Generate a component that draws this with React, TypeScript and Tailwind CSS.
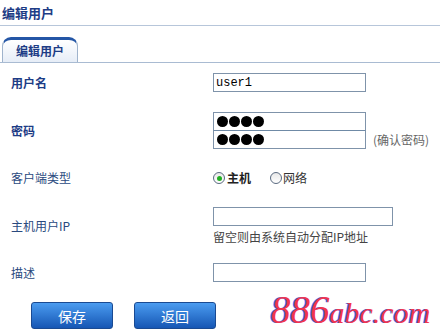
import React from "react";

const cjk = { fontFamily: '"Noto Sans CJK SC", "Noto Sans", sans-serif' };

function Label({ children, bold }: { children: React.ReactNode; bold?: boolean }) {
  return (
    <div
      className={`w-[202px] shrink-0 text-[12px] leading-[16px] ${bold ? "font-bold text-[#1d3c86]" : "text-[#2a4a7e]"}`}
    >
      {children}
    </div>
  );
}

function Radio({ checked }: { checked?: boolean }) {
  return (
    <span className="w-[12px] h-[12px] rounded-full border border-[#5a6a80] bg-gradient-to-b from-[#e8e8e8] to-white flex items-center justify-center shrink-0">
      {checked && <span className="w-[5px] h-[5px] rounded-full bg-[#22b022]" />}
    </span>
  );
}

function Dots() {
  return (
    <div className="flex items-center gap-[1px] pl-[3px] h-full">
      {[0, 1, 2, 3].map((i) => (
        <span key={i} className="w-[11px] h-[11px] rounded-full bg-black" />
      ))}
    </div>
  );
}

export default function App() {
  return (
    <div className="relative w-[440px] h-[334px] bg-white overflow-hidden" style={cjk}>
      <div className="h-[26px] border-b border-[#b7c6da] flex items-center pl-[2px]">
        <span className="text-[13px] font-bold text-[#1d3c86] leading-none">编辑用户</span>
      </div>
      <div className="mt-[11px] h-[26px] border-b border-[#a9bbd2] flex items-end pl-[2px]">
        <div className="w-[76px] h-[25px] rounded-t-[9px] border border-b-0 border-[#9fb3cc] border-t-[3px] border-t-[#2456a6] bg-gradient-to-b from-white to-[#e6edf7] flex items-center justify-center">
          <span className="text-[12px] font-bold text-[#1d3c86] leading-none">编辑用户</span>
        </div>
      </div>

      <div className="pl-[11px]">
        <div className="mt-[10px] flex items-center h-[19px]">
          <Label bold>用户名</Label>
          <div className="w-[153px] h-[19px] border border-[#7f93aa] flex items-center pl-[2px] text-[12px] text-black" style={{ fontFamily: '"Liberation Mono", monospace' }}>
            user1
          </div>
        </div>

        <div className="mt-[20px] flex items-center">
          <Label bold>密码</Label>
          <div className="flex flex-col">
            <div className="w-[153px] h-[19px] border border-[#7f93aa]">
              <Dots />
            </div>
            <div className="flex items-center -mt-[1px]">
              <div className="w-[153px] h-[19px] border border-[#7f93aa] border-t-[#6f8aa6]">
                <Dots />
              </div>
              <span className="ml-[7px] text-[12px] text-[#666]">(确认密码)</span>
            </div>
          </div>
        </div>

        <div className="mt-[20px] flex items-center h-[18px]">
          <Label>客户端类型</Label>
          <div className="flex items-center text-[12px] font-bold text-[#222]">
            <Radio checked />
            <span className="ml-[2px]">主机</span>
            <span className="w-[19px]" />
            <Radio />
            <span className="ml-[1px] font-normal text-[#333]">网络</span>
          </div>
        </div>

        <div className="mt-[20px] flex items-center">
          <Label>主机用户IP</Label>
          <div className="flex flex-col">
            <div className="w-[180px] h-[19px] border border-[#7f93aa]" />
            <span className="mt-[3px] text-[12px] leading-[16px] text-[#444]">留空则由系统自动分配IP地址</span>
          </div>
        </div>

        <div className="mt-[18px] flex items-center h-[19px]">
          <Label>描述</Label>
          <div className="w-[153px] h-[19px] border border-[#7f93aa]" />
        </div>

        <div className="mt-[20px] flex gap-[21px] pl-[20px]">
          <button className="w-[82px] h-[27px] rounded-[3px] border border-[#1a4a92] bg-gradient-to-b from-[#4b9cf0] to-[#1656b4] text-white text-[14px] leading-none">
            保存
          </button>
          <button className="w-[82px] h-[27px] rounded-[3px] border border-[#1a4a92] bg-gradient-to-b from-[#4b9cf0] to-[#1656b4] text-white text-[14px] leading-none">
            返回
          </button>
        </div>
      </div>

      <div
        className="absolute left-[271px] top-[290px] italic text-[#f2354f] leading-none whitespace-nowrap"
        style={{ fontFamily: '"Liberation Serif", serif', textShadow: "-1.5px 0 #4466ee" }}
      >
        <span className="text-[39px]">886</span>
        <span className="text-[30px]">abc.com</span>
      </div>
    </div>
  );
}
